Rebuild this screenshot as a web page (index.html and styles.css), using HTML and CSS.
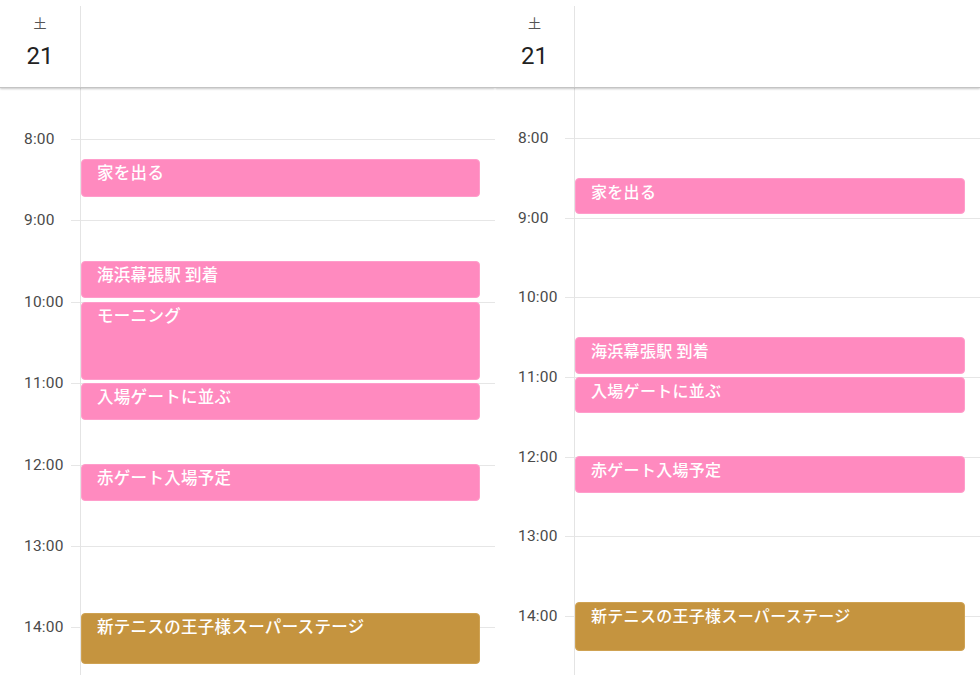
FILE: index.html
```html
<!DOCTYPE html>
<html lang="ja">
<head>
<meta charset="utf-8">
<title>Calendar</title>
<link rel="stylesheet" href="styles.css">
</head>
<body>
<div class="page">
  <section class="panel panel-a">
    <header class="head">
      <div class="day"><span class="dow">土</span><span class="date">21</span></div>
    </header>
    <div class="body">
      <div class="hours">
        <div class="hour"><span class="label">8:00</span><span class="line"></span></div>
        <div class="hour"><span class="label">9:00</span><span class="line"></span></div>
        <div class="hour"><span class="label">10:00</span><span class="line"></span></div>
        <div class="hour"><span class="label">11:00</span><span class="line"></span></div>
        <div class="hour"><span class="label">12:00</span><span class="line"></span></div>
        <div class="hour"><span class="label">13:00</span><span class="line"></span></div>
        <div class="hour"><span class="label">14:00</span><span class="line"></span></div>
      </div>
      <div class="events">
        <div class="ev pink" style="top:72px;height:38px">家を出る</div>
        <div class="ev pink" style="top:174px;height:37px">海浜幕張駅 到着</div>
        <div class="ev pink" style="top:215px;height:78px">モーニング</div>
        <div class="ev pink" style="top:296px;height:37px">入場ゲートに並ぶ</div>
        <div class="ev pink" style="top:377px;height:37px">赤ゲート入場予定</div>
        <div class="ev gold" style="top:526px;height:51px">新テニスの王子様スーパーステージ</div>
      </div>
    </div>
  </section>
  <section class="panel panel-b">
    <header class="head">
      <div class="day"><span class="dow">土</span><span class="date">21</span></div>
    </header>
    <div class="body">
      <div class="hours">
        <div class="hour"><span class="label">8:00</span><span class="line"></span></div>
        <div class="hour"><span class="label">9:00</span><span class="line"></span></div>
        <div class="hour"><span class="label">10:00</span><span class="line"></span></div>
        <div class="hour"><span class="label">11:00</span><span class="line"></span></div>
        <div class="hour"><span class="label">12:00</span><span class="line"></span></div>
        <div class="hour"><span class="label">13:00</span><span class="line"></span></div>
        <div class="hour"><span class="label">14:00</span><span class="line"></span></div>
      </div>
      <div class="events">
        <div class="ev pink" style="top:91px;height:36px">家を出る</div>
        <div class="ev pink" style="top:250px;height:37px">海浜幕張駅 到着</div>
        <div class="ev pink" style="top:290px;height:36px">入場ゲートに並ぶ</div>
        <div class="ev pink" style="top:369px;height:37px">赤ゲート入場予定</div>
        <div class="ev gold" style="top:515px;height:49px">新テニスの王子様スーパーステージ</div>
      </div>
    </div>
  </section>
</div>
</body>
</html>
```
FILE: styles.css
```css
* { box-sizing: border-box; }
html, body { margin: 0; padding: 0; background: #fff; }
body {
  font-family: Roboto, "Noto Sans CJK JP", sans-serif;
  color: #333;
}
.page {
  display: flex;
  width: 980px;
  height: 675px;
  overflow: hidden;
}
.panel {
  display: flex;
  flex-direction: column;
  height: 675px;
  overflow: hidden;
}
.panel-a { width: 495px; --gut: 80px; --tick: 71px; --lh: 81.4px; --pt: 51px; }
.panel-b { width: 485px; --gut: 79px; --tick: 70px; --lh: 79.7px; --pt: 50px; }

.head {
  height: 88px;
  flex: none;
  padding-top: 6px;
  display: flex;
  border-bottom: 1px solid #c4c4c4;
  box-shadow: 0 1px 2px rgba(0, 0, 0, 0.22);
  position: relative;
  z-index: 2;
  background: #fff;
}
.day {
  width: calc(var(--gut) + 1px);
  border-right: 1px solid #e4e4e4;
  display: flex;
  flex-direction: column;
  align-items: center;
  padding-top: 8px;
}
.dow {
  font-family: "Noto Sans CJK JP", sans-serif;
  font-size: 13px;
  line-height: 18px;
  color: #555;
}
.date {
  font-size: 24px;
  line-height: 30px;
  margin-top: 9px;
  color: #222;
}

.body {
  position: relative;
  flex: 1;
}
.hours {
  padding-top: var(--pt);
}
.hour {
  display: flex;
  height: var(--lh);
}
.label {
  width: var(--tick);
  flex: none;
  padding-left: 24px;
  margin-top: -10px;
  font-size: 15.5px;
  line-height: 20px;
  letter-spacing: 0.2px;
  color: #4a4a4a;
  height: 20px;
}
.panel-b .label { padding-left: 23px; }
.line {
  flex: 1;
  border-top: 1px solid #e6e6e6;
}

.events {
  position: absolute;
  top: -1px;
  bottom: 0;
  left: var(--gut);
  right: 0;
  border-left: 1px solid #e4e4e4;
}
.ev {
  position: absolute;
  left: 0;
  right: 15px;
  border-radius: 4px;
  padding: 1px 15px;
  color: #fff;
  font-family: "Noto Sans CJK JP", sans-serif;
  font-weight: 500;
  font-size: 16px;
  line-height: 22px;
  letter-spacing: 0.3px;
  white-space: nowrap;
  overflow: hidden;
}
.panel-a .ev { font-size: 16.5px; }
.pink {
  background: #ff8abf;
  border: 1px solid #ff9dcb;
}
.gold {
  background: #c5943f;
  border: 1px solid #cfa252;
}
```
